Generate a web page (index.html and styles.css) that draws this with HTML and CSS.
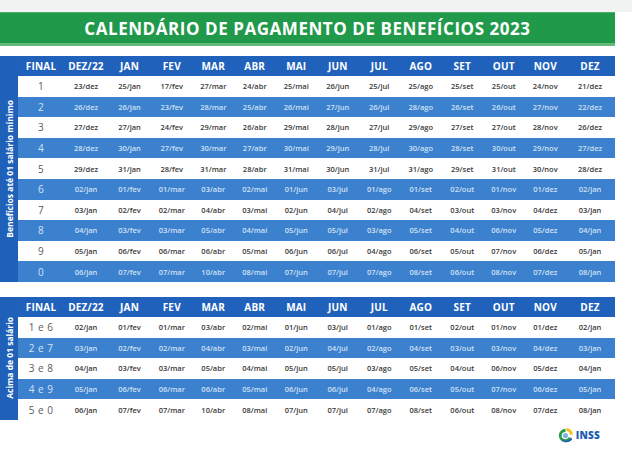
FILE: index.html
```html
<!DOCTYPE html>
<html lang="pt-BR">
<head>
<meta charset="utf-8">
<title>Calendário de Pagamento de Benefícios 2023</title>
<link rel="stylesheet" href="styles.css">
</head>
<body>
<div class="top-strip"></div>
<header class="banner"><h1>CALENDÁRIO DE PAGAMENTO DE BENEFÍCIOS 2023</h1></header>

<section class="block block-1">
  <div class="side"><span class="side-label">Benefícios até 01 salário mínimo</span></div>
  <div class="grid">
    <div class="row head"><span>FINAL</span><span>DEZ/22</span><span>JAN</span><span>FEV</span><span>MAR</span><span>ABR</span><span>MAI</span><span>JUN</span><span>JUL</span><span>AGO</span><span>SET</span><span>OUT</span><span>NOV</span><span>DEZ</span></div>
    <div class="row light"><span class="fin">1</span><span>23/dez</span><span>25/jan</span><span>17/fev</span><span>27/mar</span><span>24/abr</span><span>25/mai</span><span>26/jun</span><span>25/jul</span><span>25/ago</span><span>25/set</span><span>25/out</span><span>24/nov</span><span>21/dez</span></div>
    <div class="row blue"><span class="fin">2</span><span>26/dez</span><span>26/jan</span><span>23/fev</span><span>28/mar</span><span>25/abr</span><span>26/mai</span><span>27/jun</span><span>26/jul</span><span>28/ago</span><span>26/set</span><span>26/out</span><span>27/nov</span><span>22/dez</span></div>
    <div class="row light"><span class="fin">3</span><span>27/dez</span><span>27/jan</span><span>24/fev</span><span>29/mar</span><span>26/abr</span><span>29/mai</span><span>28/jun</span><span>27/jul</span><span>29/ago</span><span>27/set</span><span>27/out</span><span>28/nov</span><span>26/dez</span></div>
    <div class="row blue"><span class="fin">4</span><span>28/dez</span><span>30/jan</span><span>27/fev</span><span>30/mar</span><span>27/abr</span><span>30/mai</span><span>29/jun</span><span>28/jul</span><span>30/ago</span><span>28/set</span><span>30/out</span><span>29/nov</span><span>27/dez</span></div>
    <div class="row light"><span class="fin">5</span><span>29/dez</span><span>31/jan</span><span>28/fev</span><span>31/mar</span><span>28/abr</span><span>31/mai</span><span>30/jun</span><span>31/jul</span><span>31/ago</span><span>29/set</span><span>31/out</span><span>30/nov</span><span>28/dez</span></div>
    <div class="row blue"><span class="fin">6</span><span>02/jan</span><span>01/fev</span><span>01/mar</span><span>03/abr</span><span>02/mai</span><span>01/jun</span><span>03/jul</span><span>01/ago</span><span>01/set</span><span>02/out</span><span>01/nov</span><span>01/dez</span><span>02/jan</span></div>
    <div class="row light"><span class="fin">7</span><span>03/jan</span><span>02/fev</span><span>02/mar</span><span>04/abr</span><span>03/mai</span><span>02/jun</span><span>04/jul</span><span>02/ago</span><span>04/set</span><span>03/out</span><span>03/nov</span><span>04/dez</span><span>03/jan</span></div>
    <div class="row blue"><span class="fin">8</span><span>04/jan</span><span>03/fev</span><span>03/mar</span><span>05/abr</span><span>04/mai</span><span>05/jun</span><span>05/jul</span><span>03/ago</span><span>05/set</span><span>04/out</span><span>06/nov</span><span>05/dez</span><span>04/jan</span></div>
    <div class="row light"><span class="fin">9</span><span>05/jan</span><span>06/fev</span><span>06/mar</span><span>06/abr</span><span>05/mai</span><span>06/jun</span><span>06/jul</span><span>04/ago</span><span>06/set</span><span>05/out</span><span>07/nov</span><span>06/dez</span><span>05/jan</span></div>
    <div class="row blue"><span class="fin">0</span><span>06/jan</span><span>07/fev</span><span>07/mar</span><span>10/abr</span><span>08/mai</span><span>07/jun</span><span>07/jul</span><span>07/ago</span><span>08/set</span><span>06/out</span><span>08/nov</span><span>07/dez</span><span>08/jan</span></div>
  </div>
</section>

<section class="block block-2">
  <div class="side"><span class="side-label">Acima de 01 salário</span></div>
  <div class="grid">
    <div class="row head"><span>FINAL</span><span>DEZ/22</span><span>JAN</span><span>FEV</span><span>MAR</span><span>ABR</span><span>MAI</span><span>JUN</span><span>JUL</span><span>AGO</span><span>SET</span><span>OUT</span><span>NOV</span><span>DEZ</span></div>
    <div class="row light"><span class="fin">1 e 6</span><span>02/jan</span><span>01/fev</span><span>01/mar</span><span>03/abr</span><span>02/mai</span><span>01/jun</span><span>03/jul</span><span>01/ago</span><span>01/set</span><span>02/out</span><span>01/nov</span><span>01/dez</span><span>02/jan</span></div>
    <div class="row blue"><span class="fin">2 e 7</span><span>03/jan</span><span>02/fev</span><span>02/mar</span><span>04/abr</span><span>03/mai</span><span>02/jun</span><span>04/jul</span><span>02/ago</span><span>04/set</span><span>03/out</span><span>03/nov</span><span>04/dez</span><span>03/jan</span></div>
    <div class="row light"><span class="fin">3 e 8</span><span>04/jan</span><span>03/fev</span><span>03/mar</span><span>05/abr</span><span>04/mai</span><span>05/jun</span><span>05/jul</span><span>03/ago</span><span>05/set</span><span>04/out</span><span>06/nov</span><span>05/dez</span><span>04/jan</span></div>
    <div class="row blue"><span class="fin">4 e 9</span><span>05/jan</span><span>06/fev</span><span>06/mar</span><span>06/abr</span><span>05/mai</span><span>06/jun</span><span>06/jul</span><span>04/ago</span><span>06/set</span><span>05/out</span><span>07/nov</span><span>06/dez</span><span>05/jan</span></div>
    <div class="row light"><span class="fin">5 e 0</span><span>06/jan</span><span>07/fev</span><span>07/mar</span><span>10/abr</span><span>08/mai</span><span>07/jun</span><span>07/jul</span><span>07/ago</span><span>08/set</span><span>06/out</span><span>08/nov</span><span>07/dez</span><span>08/jan</span></div>
  </div>
</section>

<footer class="footer">
  <div class="logo">
    <svg class="logo-mark" viewBox="0 0 20 20" width="17" height="17" aria-hidden="true">
      <path d="M10 2 A8 8 0 1 0 17.5 13 L13.5 12 A4.2 4.2 0 1 1 10 6 Z" fill="#2e9a46"/>
      <path d="M6 14 C8 17 13 17 16 13 L18 14 C15 19 8 19 5 15 Z" fill="#1d5fb8"/>
      <path d="M11 1.5 C15 1.5 18.5 4.5 18.5 9 L15 9 C15 6.5 13 4.8 11 4.8 Z" fill="#f2c21b"/>
      <circle cx="10" cy="10" r="3" fill="#7ab3e6"/>
    </svg>
    <span class="logo-text">INSS</span>
  </div>
</footer>
</body>
</html>
```

FILE: styles.css
```css
* { box-sizing: border-box; margin: 0; padding: 0; }

body {
  width: 632px;
  height: 456px;
  overflow: hidden;
  background: #ffffff;
  font-family: "Open Sans", "Liberation Sans", sans-serif;
}

.top-strip {
  height: 12px;
  background: #f1f2f2;
}

.banner {
  width: 615px;
  height: 34px;
  background: #21994a;
  border-top: 1px solid #4cae67;
  border-bottom: 3px solid #62bb7a;
  display: flex;
  align-items: center;
  justify-content: center;
}

.banner h1 {
  color: #ffffff;
  font-size: 17px;
  font-weight: 700;
  letter-spacing: 0.55px;
  line-height: 1;
}

.block {
  width: 615px;
  display: flex;
}

.block-1 { margin-top: 10px; }
.block-2 { margin-top: 15px; }

.side {
  width: 18px;
  background: #1f60b8;
  display: flex;
  align-items: center;
  justify-content: center;
}

.side-label {
  writing-mode: vertical-rl;
  transform: rotate(180deg);
  color: #ffffff;
  font-size: 8.5px;
  font-weight: 700;
  white-space: nowrap;
}

.grid {
  flex: 1;
  display: flex;
  flex-direction: column;
}

.row {
  display: grid;
  grid-template-columns: 46px 44px 43px repeat(10, 41.5px) 48px;
  height: 20.6px;
  align-items: center;
  text-align: center;
  font-size: 7.5px;
  font-weight: 600;
}

.row span { white-space: nowrap; }

.head {
  height: 20px;
  background: #1f61bb;
  color: #ffffff;
  font-size: 10px;
  font-weight: 700;
  letter-spacing: 0.2px;
}

.light {
  background: #ffffff;
  color: #3a3a3a;
}

.blue {
  background: #3c81ce;
  color: #cfe0f5;
}

.fin {
  font-size: 10px;
  font-weight: 400;
  letter-spacing: 0.5px;
}

.light .fin { color: #5a5a5a; }
.blue .fin { color: #d3e3f6; }

.footer {
  width: 615px;
  display: flex;
  justify-content: flex-end;
  padding: 7px 15px 0 0;
}

.logo {
  display: flex;
  align-items: center;
  gap: 2px;
}

.logo-text {
  color: #1c5db5;
  font-size: 10px;
  font-weight: 800;
  letter-spacing: 0.2px;
}
```
